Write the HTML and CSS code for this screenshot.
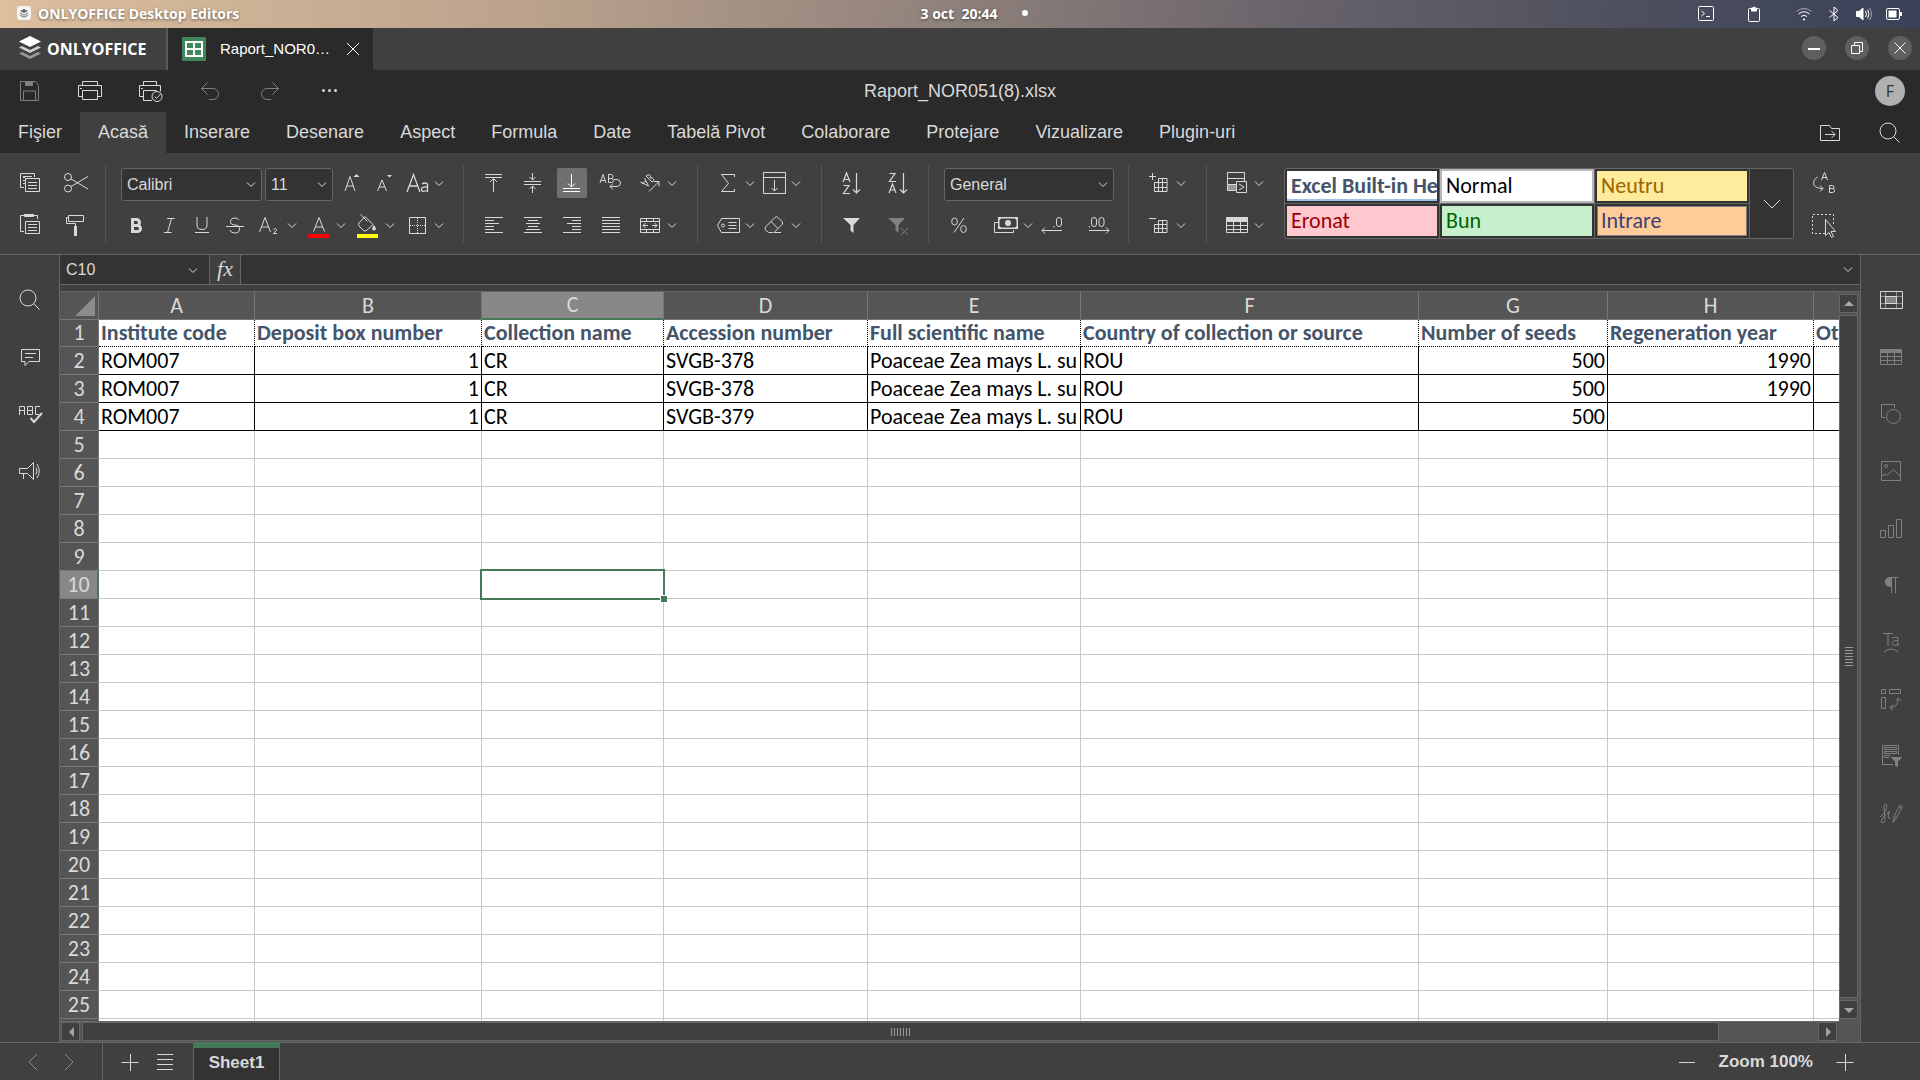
FILE: index.html
```html
<!DOCTYPE html>
<html lang="ro">
<head>
<meta charset="utf-8">
<title>Raport_NOR051(8).xlsx - ONLYOFFICE</title>
<link rel="stylesheet" href="styles.css">
</head>
<body>
<svg class="defs" aria-hidden="true">
  <symbol id="chev" viewBox="0 0 14 30"><path d="M3 13.500l4 4 4-4"/></symbol>
  <symbol id="find" viewBox="0 0 30 30"><circle cx="13" cy="13" r="8"/><path d="M18.500 18.500l6 6"/></symbol>
  <symbol id="stack" viewBox="0 0 24 28"><path fill="#fff" stroke="none" d="M12 1l11 5.500-11 5.500L1 6.500z"/><path fill="#d0d0d0" stroke="none" d="M1 12.500l3-1.500 8 4 8-4 3 1.500-11 5.500z"/><path fill="#999" stroke="none" d="M1 18.500l3-1.500 8 4 8-4 3 1.500-11 5.500z"/></symbol>
</svg>

<div class="system-bar">
  <div class="system-app">
    <svg class="app-badge" width="14" height="14" viewBox="0 0 14 14"><rect width="14" height="14" rx="3" fill="#f2f2f2" stroke="none"/><path fill="#666" stroke="none" d="M7 3l4 2-4 2-4-2z"/><path stroke="#777" d="M3 7.200l4 2 4-2M3 9.200l4 2 4-2"/></svg>
    <span>ONLYOFFICE Desktop Editors</span>
  </div>
  <div class="system-clock"><span>3 oct&nbsp; 20:44</span><i class="clock-dot"></i></div>
  <div class="system-tray">
    <svg class="tray-wide" width="18" height="18" viewBox="0 0 18 18"><rect x="1.500" y="1.500" width="15" height="14" rx="1"/><path d="M4.500 6l3 2.500-3 2.500M9 11.500h4"/></svg>
    <svg class="tray-wider" width="18" height="18" viewBox="0 0 18 18"><rect x="3.500" y="3.500" width="11" height="13" rx="1"/><path fill="currentColor" d="M6.500 3h1.500a1 1 0 0 1 2 0h1.500v3h-5z"/></svg>
    <svg width="18" height="18" viewBox="0 0 18 18"><path opacity=".5" d="M1.500 6.500q7.500-6 15 0"/><path d="M3.500 9q5.500-4.500 11 0M6 11.500q3-2.500 6 0"/><circle cx="9" cy="14.500" r="1" fill="currentColor" stroke="none"/></svg>
    <svg width="18" height="18" viewBox="0 0 18 18"><path d="M4.500 5.500l8.500 7-4 3.500V2l4 3.500-8.500 7"/></svg>
    <svg width="18" height="18" viewBox="0 0 18 18"><path fill="currentColor" d="M1.500 6.500h2.500l4-3.500v12l-4-3.500H1.500z"/><path d="M10.500 6q2 3 0 6M12.500 4.500q3 4.500 0 9"/><path opacity=".5" d="M14.500 3q4 6 0 12"/></svg>
    <svg width="18" height="18" viewBox="0 0 18 18"><rect x="1.500" y="3.500" width="13" height="11" rx="1.500"/><path fill="currentColor" stroke="none" d="M3.500 5.500h8v7h-8zM15 7h2v4h-2z"/></svg>
  </div>
</div>

<div class="window-bar">
  <a class="brand" href="#"><svg width="24" height="28"><use href="#stack"/></svg><span>ONLYOFFICE</span></a>
  <div class="doc-tab">
    <svg width="24" height="24" viewBox="0 0 24 24"><rect width="24" height="24" rx="1" fill="#40865c" stroke="none"/><path stroke="#fff" stroke-width="2" d="M4 5h16v14H4zM12 5v14M4 12h16"/></svg>
    <span>Raport_NOR0…</span>
    <button class="plain" aria-label="Close tab"><svg width="14" height="14" viewBox="0 0 14 14"><path d="M1 1l12 12M13 1L1 13"/></svg></button>
  </div>
  <div class="window-buttons">
    <button aria-label="Minimize"><svg width="24" height="24" viewBox="0 0 24 24"><path stroke-width="2" d="M6 13h12"/></svg></button>
    <button aria-label="Restore"><svg width="24" height="24" viewBox="0 0 24 24"><path d="M9.500 9V6.500h8v9H15M6.500 9.500h8v8h-8z"/></svg></button>
    <button aria-label="Close"><svg width="24" height="24" viewBox="0 0 24 24"><path d="M6.500 6.500l11 11M17.500 6.500l-11 11"/></svg></button>
  </div>
</div>

<header class="title-row">
  <div class="quick-access">
    <button class="plain off" aria-label="Save"><svg width="30" height="30" viewBox="0 0 30 30"><path d="M5.500 5.500h15l3 4v15h-18zM8.500 24v-9h12v9"/><path fill="currentColor" d="M10.500 5.500h7v4h-7z"/></svg></button>
    <button class="plain" aria-label="Print"><svg width="30" height="30" viewBox="0 0 30 30"><path d="M7.500 10V5.500h15V10M7.500 20.500h-4v-11h23v11h-4M7.500 14.500h15v9h-15zM5 12.500h2"/></svg></button>
    <button class="plain" aria-label="Quick print"><svg width="30" height="30" viewBox="0 0 30 30"><path d="M8.500 10V5.500h13V10M8.500 20.500h-4v-11h21v6M17 24.500H8.500v-10h13M6 12.500h2"/><circle cx="22" cy="20.500" r="5"/><path d="M19.500 20.500l2 2 4-4.500"/></svg></button>
    <button class="plain off" aria-label="Undo"><svg width="30" height="30" viewBox="0 0 30 30"><path d="M12.500 6.500l-6 6 6 6M6.500 12.500h11.500a5.500 5.500 0 0 1 0 11h-4"/></svg></button>
    <button class="plain off" aria-label="Redo"><svg width="30" height="30" viewBox="0 0 30 30"><path d="M17.500 6.500l6 6-6 6M23.500 12.500H12a5.500 5.500 0 0 0 0 11h4"/></svg></button>
    <button class="plain" aria-label="More"><svg width="30" height="30" viewBox="0 0 30 30"><g fill="currentColor" stroke="none"><circle cx="8.500" cy="14.500" r="1.500"/><circle cx="14.500" cy="14.500" r="1.500"/><circle cx="20.500" cy="14.500" r="1.500"/></g></svg></button>
  </div>
  <h1>Raport_NOR051(8).xlsx</h1>
  <div class="user"><span class="avatar">F</span></div>
</header>

<nav class="menu">
  <button class="menu-tab">Fişier</button><button class="menu-tab is-active">Acasă</button><button class="menu-tab">Inserare</button><button class="menu-tab">Desenare</button><button class="menu-tab">Aspect</button><button class="menu-tab">Formula</button><button class="menu-tab">Date</button><button class="menu-tab">Tabelă Pivot</button><button class="menu-tab">Colaborare</button><button class="menu-tab">Protejare</button><button class="menu-tab">Vizualizare</button><button class="menu-tab">Plugin-uri</button>
  <div class="menu-tools">
    <button class="plain" aria-label="Open location"><svg width="30" height="30" viewBox="0 0 30 30"><path d="M5.500 7.500h9l2 3h8v12h-19zM10 16.500h10M16.500 13l3.500 3.500-3.500 3.500"/></svg></button>
    <button class="plain" aria-label="Search"><svg width="30" height="30"><use href="#find"/></svg></button>
  </div>
</nav>

<div class="ribbon">
  <div class="group clipboard">
    <div class="line">
      <button class="tb" aria-label="Copy"><svg viewBox="0 0 30 30"><path d="M9 19.500H5.500v-14h14V9M8 9.500h2M8 12.500h2M8 15.500h2M10.500 10.500h14v13h-14zM13 14.500h9M13 17.500h9M13 20.500h9M8 8.500h9"/></svg></button>
      <button class="tb" aria-label="Cut"><svg viewBox="0 0 30 30"><circle cx="7" cy="9" r="3.500"/><circle cx="7" cy="20.500" r="3.500"/><path d="M10 11l17 10M10 18.500l17-10"/></svg></button>
    </div>
    <div class="line">
      <button class="tb" aria-label="Paste"><svg viewBox="0 0 30 30"><path d="M9 21.500H5.500v-16h17V9M10.500 11.500h14v12h-14zM13 14.500h9M13 17.500h9M13 20.500h9"/><path fill="currentColor" d="M9.500 4.500h9v2h-9z"/></svg></button>
      <button class="tb" aria-label="Copy style"><svg viewBox="0 0 30 30"><path d="M7.500 5.500h15v6h-15zM7 7.500H5.500v6h9V17"/><path fill="currentColor" stroke="none" d="M13 16h3v10h-3z"/></svg></button>
    </div>
  </div>
  <i class="sep"></i>
  <div class="group font-group">
    <div class="line tight">
      <label class="combo font-name"><select aria-label="Font"><option>Calibri</option></select><svg viewBox="0 0 14 30"><use href="#chev"/></svg></label>
      <label class="combo font-size"><select aria-label="Font size"><option>11</option></select><svg viewBox="0 0 14 30"><use href="#chev"/></svg></label>
      <button class="tb" aria-label="Increase size"><svg viewBox="0 0 30 30"><path d="M9 23l5-14.500L19 23M10.500 18h7"/><path fill="currentColor" stroke="none" d="M17.500 9l3-3 3 3z"/></svg></button>
      <button class="tb" aria-label="Decrease size"><svg viewBox="0 0 30 30"><path d="M8.500 23l4.500-11 4.500 11M10 19h6"/><path fill="currentColor" stroke="none" d="M18 7h5l-2.500 2.500z"/></svg></button>
      <button class="tb drop" aria-label="Change case"><svg viewBox="0 0 30 30"><path stroke-width="1.300" d="M5 24L11.500 6.500 18 24M7.500 18h8"/><path stroke-width="1.300" d="M20 16q3-2 5.500 0v8M25.500 19q-6-.5-6 2.500t6 1"/></svg><svg class="chev"><use href="#chev"/></svg></button>
    </div>
    <div class="line split">
      <div class="line tight">
        <button class="tb" aria-label="Bold"><svg viewBox="0 0 30 30"><path stroke-width="3" d="M11.500 9.500h4a3 3 0 0 1 0 6h-4zM11.500 15.500h5a3 3 0 0 1 0 6h-5z"/></svg></button>
        <button class="tb" aria-label="Italic"><svg viewBox="0 0 30 30"><path d="M13 8.500h7.500M10 22.500h7.500M17.500 8.500l-4 14"/></svg></button>
        <button class="tb" aria-label="Underline"><svg viewBox="0 0 30 30"><path d="M10 7v8q0 4.500 5 4.500t5-4.500V7M8 22.500h14"/></svg></button>
        <button class="tb" aria-label="Strikethrough"><svg viewBox="0 0 30 30"><path d="M19 10q-1-2-4-2-4.500 0-4.500 3.500t4.500 3.500 4.500 4-4.500 4-5-3M6 16.500h18"/></svg></button>
      </div>
      <div class="line roomy">
        <button class="tb drop" aria-label="Subscript"><svg viewBox="0 0 30 30"><path d="M4.500 22L10 7.500 15.500 22M6.500 17h7M18.500 19.500q2.500-2 3 0 0 1-3 4h3.500"/></svg><svg class="chev"><use href="#chev"/></svg></button>
        <button class="tb drop" aria-label="Font colour"><svg viewBox="0 0 30 30"><path d="M9.500 21.500l5.500-14 5.500 14M11.500 17h7"/><path fill="#f00" stroke="none" d="M4 24h21v4H4z"/></svg><svg class="chev"><use href="#chev"/></svg></button>
        <button class="tb drop" aria-label="Fill colour"><svg viewBox="0 0 30 30"><path d="M12 6.500l8 8-6.500 6q-1.500 1-3 0l-4.500-4.500q-1-1.500 0-3zM7.500 4.500l7 7"/><path fill="currentColor" stroke="none" d="M21 15q4 5 0 5.500-4-.5 0-5.500z"/><path fill="#ff0" stroke="none" d="M4 24h21v4H4z"/></svg><svg class="chev"><use href="#chev"/></svg></button>
        <button class="tb drop" aria-label="Borders"><svg viewBox="0 0 30 30"><path d="M7.500 7.500h16v16h-16z"/><path stroke-dasharray="1 1" d="M15.500 8v15M8 15.500h15"/></svg><svg class="chev"><use href="#chev"/></svg></button>
      </div>
    </div>
  </div>
  <i class="sep"></i>
  <div class="group drops">
    <div class="line nine">
      <button class="tb" aria-label="Align top"><svg viewBox="0 0 30 30"><path d="M6 6.500h17M6 9.500h17M14.500 24V11M11 14l3.500-3.500L18 14"/></svg></button>
      <button class="tb" aria-label="Align middle"><svg viewBox="0 0 30 30"><path d="M6 13.500h17M6 16.500h17M14.500 5v7M11.500 9l3 3 3-3M14.500 25v-7M11.500 21l3-3 3 3"/></svg></button>
      <button class="tb is-on" aria-label="Align bottom"><svg viewBox="0 0 30 30"><path d="M6 20.500h17M6 23.500h17M14.500 6v13M11 15.500l3.500 3.500 3.500-3.500"/></svg></button>
      <button class="tb" aria-label="Wrap text"><svg viewBox="0 0 30 30"><path d="M4 15l3-8.500L10 15M5 12.500h4M12.500 6.500v8h3q2-.5 2-2t-2-2h-3 3q1.500-.5 1.500-2t-1.500-2zM18 11.500h3q3.500.5 3.500 3.500t-3.500 3.500h-7M17 15.500l-3 3 3 3"/></svg></button>
      <button class="tb drop" aria-label="Orientation"><svg viewBox="0 0 30 30"><path d="M5.500 14l8 4-4-8M7 16l4-3M11 8l6 6q2.500-1 1.500-3t-3.500-1q1-2-.5-3t-3.500 1zM14 23.500L24 13.500M19 13.500h5v5"/></svg><svg class="chev"><use href="#chev"/></svg></button>
    </div>
    <div class="line nine">
      <button class="tb" aria-label="Align left"><svg viewBox="0 0 30 30"><path d="M6 7.500h18M6 10.500h9M6 13.500h14M6 16.500h9M6 19.500h9M6 22.500h18"/></svg></button>
      <button class="tb" aria-label="Align centre"><svg viewBox="0 0 30 30"><path d="M6 7.500h18M10 10.500h10M8 13.500h14M10 16.500h10M8 19.500h14M6 22.500h18"/></svg></button>
      <button class="tb" aria-label="Align right"><svg viewBox="0 0 30 30"><path d="M6 7.500h18M15 10.500h9M10 13.500h14M15 16.500h9M15 19.500h9M6 22.500h18"/></svg></button>
      <button class="tb" aria-label="Justify"><svg viewBox="0 0 30 30"><path d="M6 7.500h18M6 10.500h18M6 13.500h18M6 16.500h18M6 19.500h18M6 22.500h18"/></svg></button>
      <button class="tb drop" aria-label="Merge"><svg viewBox="0 0 30 30"><path d="M5.500 8.500h19v14h-19zM5.500 11.500h19M5.500 19.500h19M11.500 8.500v3M18.500 8.500v3M11.500 19.500v3M18.500 19.500v3M8 15.500h5M17 15.500h5M10.500 13l-2.500 2.500 2.500 2.500M19.500 13l2.500 2.500-2.500 2.500"/></svg><svg class="chev"><use href="#chev"/></svg></button>
    </div>
  </div>
  <i class="sep"></i>
  <div class="group drops">
    <div class="line snug">
      <button class="tb drop" aria-label="Sum"><svg viewBox="0 0 30 30"><path d="M21.500 9V6.500h-13l7 9-7 8h13V21"/></svg><svg class="chev"><use href="#chev"/></svg></button>
      <button class="tb drop" aria-label="Fill"><svg viewBox="0 0 30 30"><path d="M4.500 4.500h22v21h-22zM4.500 9.500h22M15.500 12v11M12.500 20l3 3 3-3"/></svg><svg class="chev"><use href="#chev"/></svg></button>
    </div>
    <div class="line snug">
      <button class="tb drop" aria-label="Named ranges"><svg viewBox="0 0 30 30"><path d="M8.500 8.500h18v14h-18l-4-7zM15.500 12.500h8M15.500 15.500h8M15.500 18.500h8"/><circle cx="10" cy="15.500" r="1.500"/></svg><svg class="chev"><use href="#chev"/></svg></button>
      <button class="tb drop" aria-label="Clear"><svg viewBox="0 0 30 30"><path d="M14 22.500H9.500L6.500 20q-1-1.500 0-3L16 7.500q1.500-1.500 3 0l4 4q1.500 1.500 0 3l-8 8h7M12 11.500l7 7"/></svg><svg class="chev"><use href="#chev"/></svg></button>
    </div>
  </div>
  <i class="sep"></i>
  <div class="group">
    <div class="line wide">
      <button class="tb" aria-label="Sort ascending"><svg viewBox="0 0 30 30"><path stroke-width="1.200" d="M6 14l3.500-9 3.500 9M7.500 11.500h4M6.500 17.500H12l-5.500 8H13M19.500 5v20M16 21.500l3.500 3.500 3.500-3.500"/></svg></button>
      <button class="tb" aria-label="Sort descending"><svg viewBox="0 0 30 30"><path stroke-width="1.200" d="M5.500 5.500H11l-5.500 8H12M5 25l3.500-9 3.500 9M6.500 22h4M19.500 5v20M16 21.500l3.500 3.500 3.500-3.500"/></svg></button>
    </div>
    <div class="line wide">
      <button class="tb" aria-label="Filter"><svg viewBox="0 0 30 30"><path fill="currentColor" stroke="none" d="M6 8h17l-6.500 7v8l-3-2.500V15z"/></svg></button>
      <button class="tb off" aria-label="Clear filter"><svg viewBox="0 0 30 30"><path fill="currentColor" stroke="none" d="M4 8h17l-6.500 7v8l-3-2.500V15z"/><path d="M17 18l7 7M24 18l-7 7"/></svg></button>
    </div>
  </div>
  <i class="sep"></i>
  <div class="group number-format">
    <label class="combo"><select aria-label="Number format"><option>General</option></select><svg viewBox="0 0 14 30"><use href="#chev"/></svg></label>
    <div class="line split">
      <button class="tb" aria-label="Percent"><svg viewBox="0 0 30 30"><ellipse cx="10.500" cy="11.500" rx="2.800" ry="3.500"/><ellipse cx="19.500" cy="19" rx="2.800" ry="3.500"/><path d="M20 8L10 22.500"/></svg></button>
      <div class="line snug">
        <button class="tb drop" aria-label="Accounting"><svg viewBox="0 0 30 30"><path d="M7 12.500H3.500v10h19V20"/><path fill="currentColor" fill-rule="evenodd" stroke="none" d="M7 7h20v12H7zM10 8.500L8.500 10v6l1.500 1.500h14l1.500-1.500v-6L24 8.500z"/><circle cx="17" cy="13" r="3" fill="currentColor" stroke="none"/></svg><svg class="chev"><use href="#chev"/></svg></button>
        <button class="tb" aria-label="Decrease decimals"><svg viewBox="0 0 30 30"><path d="M5 20.500h20M8 17.500l-3 3 3 3M17 16v1.500"/><rect x="19.500" y="7.500" width="5" height="9" rx="2.500"/></svg></button>
      </div>
      <button class="tb" aria-label="Increase decimals"><svg viewBox="0 0 30 30"><path d="M5 20.500h20M22 17.500l3 3-3 3M5.500 16v1.500"/><rect x="7.500" y="7.500" width="5" height="9" rx="2.500"/><rect x="15" y="7.500" width="5" height="9" rx="2.500"/></svg></button>
    </div>
  </div>
  <i class="sep"></i>
  <div class="group drops">
    <button class="tb drop" aria-label="Insert cells"><svg viewBox="0 0 30 30"><path d="M5 8.500h7M8.500 5v7M14.500 10.500h8.500v13H10.500v-9h12.500M10.500 19.500H23M14.500 10.500v13M18.500 10.500v13"/></svg><svg class="chev"><use href="#chev"/></svg></button>
    <button class="tb drop" aria-label="Delete cells"><svg viewBox="0 0 30 30"><path d="M5 8.500h7M14.500 10.500h8.500v12H10.500v-8h12.500M10.500 18.500H23M14.500 10.500v12M18.500 10.500v12"/></svg><svg class="chev"><use href="#chev"/></svg></button>
  </div>
  <i class="sep"></i>
  <div class="group drops">
    <button class="tb drop" aria-label="Conditional formatting"><svg viewBox="0 0 30 30"><path fill="#999" stroke="none" d="M6 17h8v6H6z"/><path d="M13 22.500H5.500v-18h17V13M5.500 10.500h17M5.500 16.500H14M14.500 13.500h10v11h-10zM17 16l5 3-5 3"/></svg><svg class="chev"><use href="#chev"/></svg></button>
    <button class="tb drop" aria-label="Format as table"><svg viewBox="0 0 30 30"><path fill="currentColor" stroke="none" d="M4 7h22v5H4z"/><path d="M4.500 8v14.500h21V8M4.500 15.500h21M4.500 19.500h21M11.500 12v10M18.500 12v10"/></svg><svg class="chev"><use href="#chev"/></svg></button>
  </div>
  <div class="gallery">
    <div class="styles">
      <button class="style-cell"><span class="swatch heading">Excel Built-in He</span></button>
      <button class="style-cell picked"><span class="swatch normal">Normal</span></button>
      <button class="style-cell"><span class="swatch neutral">Neutru</span></button>
      <button class="style-cell"><span class="swatch bad">Eronat</span></button>
      <button class="style-cell"><span class="swatch good">Bun</span></button>
      <button class="style-cell"><span class="swatch entry">Intrare</span></button>
    </div>
    <button class="plain gallery-more" aria-label="More styles"><svg width="18" height="10" viewBox="0 0 18 10"><path d="M1 1l8 8 8-8"/></svg></button>
  </div>
  <div class="group">
    <button class="tb" aria-label="Replace"><svg viewBox="0 0 30 30"><path d="M8.500 9q-5 3-3.500 8 2 3.500 9 3.500M11 17.500l3 3-3 3M12.500 12l3-7.500 3 7.500M13.500 9.500h4M20.500 17.500v7h3q2 0 2-2t-2-2h-3 3q1.500 0 1.500-1.500t-1.500-1.500z"/></svg></button>
    <button class="tb" aria-label="Select all"><svg viewBox="0 0 30 30"><path stroke-dasharray="2 2" d="M16 23.500H3.500v-19h21V14"/><path fill="#404040" d="M16.500 9.500v16l3.500-3 2.500 5 2-1-2.500-5h4.500z"/></svg></button>
  </div>
</div>

<main class="workspace">
  <aside class="rail">
    <button class="plain" aria-label="Search"><svg width="30" height="30"><use href="#find"/></svg></button>
    <button class="plain" aria-label="Comments"><svg width="30" height="30" viewBox="0 0 30 30"><path d="M6.500 7.500h18v12H14l-4 4v-4H6.500zM10 11.500h11M10 15.500h8"/></svg></button>
    <button class="plain" aria-label="Spell check"><svg width="30" height="30" viewBox="0 0 30 30"><path d="M4.500 16V7.500h5V16M4.500 11.500h5M12.500 7.500v8h5v-8zM12.500 11.500h5M25 7.500h-4.500v8H24"/><path stroke-width="2" d="M15.500 19l3.500 4 8-9"/></svg></button>
    <button class="plain" aria-label="Support"><svg width="30" height="30" viewBox="0 0 30 30"><path d="M4.500 12.500h8l6-6v17l-6-6h-8zM8.500 18v5M21 11.500q2 3.500 0 7M22 8q4.500 7 0 14"/></svg></button>
  </aside>

  <section class="editor">
    <div class="formula-bar">
      <label class="name-box"><input type="text" value="C10" aria-label="Cell name"><svg viewBox="0 0 14 30"><use href="#chev"/></svg></label>
      <button class="plain fx" aria-label="Insert function">fx</button>
      <input class="formula" type="text" aria-label="Formula">
      <button class="plain expand" aria-label="Expand"><svg class="chev"><use href="#chev"/></svg></button>
    </div>
    <div class="grid-area">
      <div class="sheet-column">
        <div class="sheet">
          <table>
            <colgroup><col class="c-head"><col class="c-a"><col class="c-b"><col class="c-c"><col class="c-d"><col class="c-e"><col class="c-f"><col class="c-g"><col class="c-h"><col></colgroup>
            <thead><tr><th class="corner"><svg width="20" height="20" viewBox="0 0 20 20"><path fill="#8c8c8c" stroke="none" d="M20 0v20H0z"/></svg></th><th>A</th><th>B</th><th class="current">C</th><th>D</th><th>E</th><th>F</th><th>G</th><th>H</th><th></th></tr></thead>
            <tbody>
              <tr class="titles"><th>1</th><td>Institute code</td><td>Deposit box number</td><td>Collection name</td><td>Accession number</td><td>Full scientific name</td><td>Country of collection or source</td><td>Number of seeds</td><td>Regeneration year</td><td>Ot</td></tr>
              <tr class="data"><th>2</th><td>ROM007</td><td class="num">1</td><td>CR</td><td>SVGB-378</td><td>Poaceae Zea mays L. su</td><td>ROU</td><td class="num">500</td><td class="num">1990</td><td></td></tr>
              <tr class="data"><th>3</th><td>ROM007</td><td class="num">1</td><td>CR</td><td>SVGB-378</td><td>Poaceae Zea mays L. su</td><td>ROU</td><td class="num">500</td><td class="num">1990</td><td></td></tr>
              <tr class="data"><th>4</th><td>ROM007</td><td class="num">1</td><td>CR</td><td>SVGB-379</td><td>Poaceae Zea mays L. su</td><td>ROU</td><td class="num">500</td><td></td><td></td></tr>
              <tr><th>5</th><td></td><td></td><td></td><td></td><td></td><td></td><td></td><td></td><td></td></tr>
              <tr><th>6</th><td></td><td></td><td></td><td></td><td></td><td></td><td></td><td></td><td></td></tr>
              <tr><th>7</th><td></td><td></td><td></td><td></td><td></td><td></td><td></td><td></td><td></td></tr>
              <tr><th>8</th><td></td><td></td><td></td><td></td><td></td><td></td><td></td><td></td><td></td></tr>
              <tr><th>9</th><td></td><td></td><td></td><td></td><td></td><td></td><td></td><td></td><td></td></tr>
              <tr><th class="current">10</th><td></td><td></td><td class="selected"><i class="cursor"></i></td><td></td><td></td><td></td><td></td><td></td><td></td></tr>
              <tr><th>11</th><td></td><td></td><td></td><td></td><td></td><td></td><td></td><td></td><td></td></tr>
              <tr><th>12</th><td></td><td></td><td></td><td></td><td></td><td></td><td></td><td></td><td></td></tr>
              <tr><th>13</th><td></td><td></td><td></td><td></td><td></td><td></td><td></td><td></td><td></td></tr>
              <tr><th>14</th><td></td><td></td><td></td><td></td><td></td><td></td><td></td><td></td><td></td></tr>
              <tr><th>15</th><td></td><td></td><td></td><td></td><td></td><td></td><td></td><td></td><td></td></tr>
              <tr><th>16</th><td></td><td></td><td></td><td></td><td></td><td></td><td></td><td></td><td></td></tr>
              <tr><th>17</th><td></td><td></td><td></td><td></td><td></td><td></td><td></td><td></td><td></td></tr>
              <tr><th>18</th><td></td><td></td><td></td><td></td><td></td><td></td><td></td><td></td><td></td></tr>
              <tr><th>19</th><td></td><td></td><td></td><td></td><td></td><td></td><td></td><td></td><td></td></tr>
              <tr><th>20</th><td></td><td></td><td></td><td></td><td></td><td></td><td></td><td></td><td></td></tr>
              <tr><th>21</th><td></td><td></td><td></td><td></td><td></td><td></td><td></td><td></td><td></td></tr>
              <tr><th>22</th><td></td><td></td><td></td><td></td><td></td><td></td><td></td><td></td><td></td></tr>
              <tr><th>23</th><td></td><td></td><td></td><td></td><td></td><td></td><td></td><td></td><td></td></tr>
              <tr><th>24</th><td></td><td></td><td></td><td></td><td></td><td></td><td></td><td></td><td></td></tr>
              <tr><th>25</th><td></td><td></td><td></td><td></td><td></td><td></td><td></td><td></td><td></td></tr>
              <tr><th></th><td></td><td></td><td></td><td></td><td></td><td></td><td></td><td></td><td></td></tr>
            </tbody>
          </table>
        </div>
        <div class="scroll horizontal">
          <button class="scroll-arrow" aria-label="Scroll left"><svg width="10" height="10" viewBox="0 0 10 10"><path d="M8 0v10L3 5z"/></svg></button>
          <div class="thumb"><i class="grip"></i></div>
          <div class="track"></div>
          <button class="scroll-arrow" aria-label="Scroll right"><svg width="10" height="10" viewBox="0 0 10 10"><path d="M3 0v10l5-5z"/></svg></button>
        </div>
      </div>
      <div class="scroll vertical">
        <button class="scroll-arrow" aria-label="Scroll up"><svg width="10" height="10" viewBox="0 0 10 10"><path d="M0 7h10L5 2z"/></svg></button>
        <div class="thumb"><i class="grip"></i></div>
        <button class="scroll-arrow" aria-label="Scroll down"><svg width="10" height="10" viewBox="0 0 10 10"><path d="M0 3h10L5 8z"/></svg></button>
      </div>
    </div>
  </section>

  <aside class="rail side-panel">
    <button class="plain" aria-label="Cell settings"><svg width="30" height="30" viewBox="0 0 30 30"><path opacity=".5" d="M9.500 6v17M20.500 6v17M4 11.500h22M4 18.500h22"/><path d="M4.500 6.500h22v17h-22z"/><path fill="#858585" d="M9.500 11.500h11v7h-11z"/></svg></button>
    <button class="plain off" aria-label="Table"><svg width="30" height="30" viewBox="0 0 30 30"><path fill="currentColor" stroke="none" d="M4 7h22v4H4z"/><path d="M4.500 8v14.500h21V8M4.500 14.500h21M4.500 18.500h21M11.500 11v11M18.500 11v11"/></svg></button>
    <button class="plain off" aria-label="Shape"><svg width="30" height="30" viewBox="0 0 30 30"><path d="M9 18.500H5.500v-13h13V9"/><circle cx="17.500" cy="17.500" r="7"/></svg></button>
    <button class="plain off" aria-label="Image"><svg width="30" height="30" viewBox="0 0 30 30"><path d="M5.500 5.500h19v19h-19zM6 20l3-2 2 1.500 6-6 7 6.500"/><circle cx="10" cy="10" r="1.500"/></svg></button>
    <button class="plain off" aria-label="Chart"><svg width="30" height="30" viewBox="0 0 30 30"><path d="M4.500 17.500h5v7h-5zM12.500 12.500h5v12h-5zM20.500 6.500h5v18h-5z"/></svg></button>
    <button class="plain off" aria-label="Paragraph"><svg width="30" height="30" viewBox="0 0 30 30"><path d="M13 7.500h9M15.500 7v16M19.500 7v16"/><path fill="currentColor" stroke="none" d="M15 7v10q-6 0-6-5T15 7z"/></svg></button>
    <button class="plain off" aria-label="Text art"><svg width="30" height="30" viewBox="0 0 30 30"><path d="M7 6.500h10M12 6.500V19M16 11q4-2 6 0v8M22 13.500q-6 0-6 3 1 3 6 1M8 25q7-6 14 0"/></svg></button>
    <button class="plain off" aria-label="Pivot table"><svg width="30" height="30" viewBox="0 0 30 30"><path d="M5.500 5.500h4v4h-4zM13.500 5.500h11v4h-11zM5.500 13.500h4v11h-4zM14 23.500q8 0 8.500-9.500M19.500 17l3-3 3 3M17 20.500l-3 3 3 2.500"/></svg></button>
    <button class="plain off" aria-label="Slicer"><svg width="30" height="30" viewBox="0 0 30 30"><path d="M17 23.500H6.500v-19h16V14M8.500 6.500h12v2h-12zM8.500 10.500h12v2h-12zM13 16.500H8.500v-2h6"/><path fill="currentColor" d="M15.500 16.500h10l-4 4v5l-2-1v-4z"/></svg></button>
    <button class="plain off" aria-label="Signature"><svg width="30" height="30" viewBox="0 0 30 30"><path d="M4 19q8-6 6.500-12.500-2-2.500-2.500 3L9 22q-1 4-3.500 2.500T13.500 13q-3 9 1 7M17 24.500l1-6 6-11.500 2.500 1.500-6 11.500zM18 18.500l2.500 1.500M23 9l2.500 1.500"/></svg></button>
  </aside>
</main>

<footer class="status">
  <div class="status-nav">
    <button class="plain" aria-label="Previous sheet"><svg width="12" height="18" viewBox="0 0 12 18"><path d="M10 1L2 9l8 8"/></svg></button>
    <button class="plain" aria-label="Next sheet"><svg width="12" height="18" viewBox="0 0 12 18"><path d="M2 1l8 8-8 8"/></svg></button>
  </div>
  <div class="status-add">
    <button class="plain" aria-label="Add sheet"><svg width="18" height="18" viewBox="0 0 18 18"><path d="M.5 9.500h17M9.500 1v17"/></svg></button>
    <button class="plain" aria-label="Sheet list"><svg width="18" height="18" viewBox="0 0 18 18"><path d="M1 1.500h16M1 6.500h16M1 11.500h16M1 16.500h16"/></svg></button>
  </div>
  <button class="sheet-tab">Sheet1</button>
  <div class="zoom">
    <button class="plain" aria-label="Zoom out"><svg width="18" height="18" viewBox="0 0 18 18"><path d="M1 9.500h16"/></svg></button>
    <span>Zoom 100%</span>
    <button class="plain" aria-label="Zoom in"><svg width="18" height="18" viewBox="0 0 18 18"><path d="M.5 9.500h17M9.500 1v17"/></svg></button>
  </div>
</footer>
</body>
</html>
```
FILE: styles.css
```css
:root {
  --panel: #404040;
  --dark: #2a2a2a;
  --field: #333;
  --line: #666;
  --head: #555;
  --text: #d9d9d9;
  --green: #457a58;
  --cell-font: Carlito, Lato, sans-serif;
}

* { box-sizing: border-box; }

body {
  margin: 0;
  height: 100vh;
  display: flex;
  flex-direction: column;
  overflow: hidden;
  background: var(--panel);
  color: var(--text);
  font: 16px "Liberation Sans", Arial, sans-serif;
}

svg { display: block; fill: none; stroke: currentColor; }
.defs { position: absolute; width: 0; height: 0; }

button, input, select { font: inherit; color: inherit; margin: 0; border: 0; padding: 0; border-radius: 0; outline: 0; }
.plain { background: none; display: flex; align-items: center; justify-content: center; }
.off { color: #808080; }

/* desktop bar */
.system-bar {
  height: 28px;
  flex: none;
  display: grid;
  grid-template-columns: 1fr auto 1fr;
  align-items: center;
  background: linear-gradient(100deg, #ddbf9e 0%, #baa28c 28%, #8e807b 50%, #67626a 68%, #4d4f5e 85%, #3a4158 100%);
  color: #fff;
  font: 700 14px "Open Sans", sans-serif;
  text-shadow: 0 1px 3px rgba(0, 0, 0, .5);
}
.system-app { display: flex; align-items: center; gap: 7px; padding: 0 0 2px 17px; }
.system-clock { display: flex; align-items: center; position: relative; padding: 0 2px 2px 0; }
.clock-dot { position: absolute; left: 101px; width: 6px; height: 6px; border-radius: 50%; background: #fff; }
.system-tray { display: flex; justify-content: flex-end; gap: 12px; padding-right: 17px; }
.tray-wide { margin-right: 18px; }
.tray-wider { margin-right: 20px; }

/* window bar */
.window-bar { height: 42px; flex: none; display: flex; }
.brand {
  width: 168px;
  display: flex;
  align-items: center;
  gap: 5px;
  padding-left: 18px;
  border-right: 2px solid #585858;
  color: #fff;
  text-decoration: none;
  font: 700 16px "Open Sans", sans-serif;
}
.doc-tab {
  width: 205px;
  display: flex;
  align-items: center;
  padding: 0 13px 0 14px;
  background: var(--dark);
  color: #fff;
  font-size: 15px;
}
.doc-tab span { flex: 1; padding: 0 0 2px 14px; white-space: nowrap; }
.window-buttons { margin-left: auto; display: flex; align-items: center; gap: 19px; padding: 0 8px 2px 0; }
.window-buttons button { width: 24px; height: 24px; border-radius: 50%; background: #5f5f5f; color: #fff; }

/* title and menu */
.title-row {
  height: 42px;
  flex: none;
  display: grid;
  grid-template-columns: 1fr auto 1fr;
  align-items: center;
  background: var(--dark);
}
.title-row h1 { margin: 0; font-size: 18px; font-weight: 400; }
.quick-access { display: flex; }
.quick-access button { width: 60px; }
.user { display: flex; justify-content: flex-end; padding-right: 15px; }
.avatar {
  width: 30px;
  height: 30px;
  border-radius: 50%;
  background: #b0b0b0;
  color: #333;
  font: 16px/30px "Open Sans", sans-serif;
  text-align: center;
}
.menu { height: 41px; flex: none; display: flex; background: var(--dark); }
.menu-tab { padding: 0 18px; background: none; font-size: 18px; }
.menu-tab.is-active { background: var(--panel); }
.menu-tools { margin-left: auto; display: flex; }
.menu-tools button { width: 60px; }

/* ribbon */
.ribbon {
  height: 102px;
  flex: none;
  display: flex;
  padding: 15px 0 0 15px;
  border-bottom: 1px solid var(--line);
}
.group { display: flex; flex-direction: column; gap: 12px; height: 72px; }
.group.drops { padding-right: 4px; }
.group.font-group { padding-right: 3px; }
.sep { width: 1px; height: 78px; margin: -3px 15px 0 14px; background: #555; }
.line { display: flex; height: 30px; }
.line.split { justify-content: space-between; }
.clipboard .line { gap: 16px; }
.snug { gap: 2px; }
.tight { gap: 3px; }
.roomy { gap: 5px; }
.nine { gap: 9px; }
.wide { gap: 17px; }
.tb { width: 30px; height: 30px; background: none; }
.tb svg { width: 30px; height: 30px; }
.tb.drop { width: 44px; display: flex; }
.tb svg.chev, .chev { width: 14px; height: 30px; }
.tb.is-on { background: #707070; border-radius: 2px; color: #fff; }
.combo { position: relative; display: block; height: 32px; }
.combo select {
  width: 100%;
  height: 33px;
  appearance: none;
  padding: 0 5px;
  background: var(--field);
  border: 1px solid var(--line);
  border-radius: 3px;
}
.combo svg, .name-box svg { position: absolute; right: 4px; top: 1px; width: 14px; height: 30px; pointer-events: none; }
.font-name { width: 141px; }
.font-size { width: 68px; }
.number-format { width: 170px; }
.number-format .combo { height: 30px; }

.gallery {
  width: 510px;
  height: 71px;
  margin: 0 15px 0 14px;
  display: flex;
  background: var(--field);
  border: 1px solid var(--line);
  border-radius: 3px;
}
.styles { display: grid; grid-template-columns: repeat(3, 155px); grid-template-rows: 35px 34px; }
.style-cell { display: block; min-width: 0; padding: 2px; background: none; border-right: 1px solid var(--line); }
.style-cell:nth-child(-n+3) { border-bottom: 1px solid var(--line); }
.style-cell.picked { background: #b8b8b8; }
.swatch {
  display: block;
  width: 100%;
  height: 30px;
  padding-left: 4px;
  overflow: hidden;
  white-space: nowrap;
  text-align: left;
  font: 22px/30px var(--cell-font);
}
.heading { background: #fff; color: #44546a; font-weight: 700; border-bottom: 2px solid #9bc2e6; }
.normal { background: #fff; color: #000; }
.neutral { background: #ffeb9c; color: #9c6500; }
.bad { background: #ffc7ce; color: #9c0006; }
.good { background: #c6efce; color: #006100; }
.entry { background: #ffcc99; color: #3f3f76; box-shadow: inset 0 0 0 1px #7f7f7f; }
.gallery-more { flex: 1; }

/* workspace */
.workspace { flex: 1; min-height: 0; display: flex; }
.rail { width: 59px; flex: none; display: flex; flex-direction: column; align-items: center; gap: 27px; padding-top: 30px; }
.rail button { height: 30px; }
.editor { flex: 1; min-width: 0; display: flex; flex-direction: column; border: solid var(--line); border-width: 0 1px; }

.formula-bar { height: 30px; flex: none; display: flex; background: var(--field); border-bottom: 1px solid var(--line); }
.name-box { position: relative; width: 149px; }
.name-box input { width: 100%; height: 29px; padding-left: 6px; background: none; }
.name-box svg { right: 9px; top: 0; }
.fx { width: 32px; padding-bottom: 2px; border: solid var(--line); border-width: 0 1px; background: var(--panel); font: italic 22px "Liberation Serif", serif; }
.formula { flex: 1; min-width: 0; background: none; }
.expand { width: 24px; padding-bottom: 2px; }

.grid-area { flex: 1; min-height: 0; display: flex; margin-top: 6px; border-top: 1px solid var(--line); background: var(--head); }
.sheet-column { flex: 1; min-width: 0; display: flex; flex-direction: column; }
.sheet { flex: 1; min-height: 0; overflow: hidden; background: #fff; }

table { width: 100%; table-layout: fixed; border-collapse: separate; border-spacing: 0; font: 22px/26px var(--cell-font); color: #000; }
.c-head { width: 39px; }
.c-a { width: 156px; }
.c-b { width: 227px; }
.c-c { width: 182px; }
.c-d { width: 204px; }
.c-e { width: 213px; }
.c-f { width: 338px; }
.c-g { width: 189px; }
.c-h { width: 206px; }
tr { height: 28px; }
td, th { padding: 0 2px; white-space: nowrap; overflow: hidden; border: solid #c9c9c9; border-width: 0 1px 1px 0; }
th { background: var(--head); color: var(--text); font-weight: 400; border-color: #777; }
tr > :last-child { border-right: 0; padding-right: 0; }
th.current { background: #888; }
thead .current { border-bottom: 2px solid var(--green); }
tbody .current { border-right: 2px solid var(--green); }
.corner svg { margin-left: 13px; }
.titles { height: 27px; }
.titles td { color: #44546a; font-weight: 700; border-style: dotted; border-color: #000; }
.data td { border-color: #000; }
.num { text-align: right; }
.selected { position: relative; overflow: visible; }
.cursor { position: absolute; inset: -2px; border: 2px solid var(--green); }
.cursor::after { content: ""; position: absolute; right: -4px; bottom: -4px; width: 6px; height: 6px; background: var(--green); border: solid #fff; border-width: 1px 0 0 1px; }

/* scroll bars */
.scroll { flex: none; display: flex; background: var(--head); }
.scroll-arrow { width: 19px; height: 19px; flex: none; display: flex; align-items: center; justify-content: center; background: var(--panel); border: 1px solid var(--line); }
.scroll-arrow svg { fill: #a6a6a6; stroke: none; }
.thumb { display: flex; align-items: center; justify-content: center; background: var(--panel); border: 1px solid var(--line); }
.horizontal { height: 21px; padding: 0 2px 0 1px; gap: 2px; border-top: 1px solid var(--line); }
.horizontal .thumb { flex: 1; height: 19px; }
.horizontal .track { width: 95px; }
.horizontal .grip { width: 20px; height: 8px; background: repeating-linear-gradient(90deg, #999 0 1px, transparent 1px 3px); }
.vertical { flex-direction: column; width: 21px; padding: 2px 2px 23px 0; gap: 2px; }
.vertical .thumb { flex: 1; }
.vertical .grip { width: 8px; height: 20px; background: repeating-linear-gradient(#999 0 1px, transparent 1px 3px); }

/* status bar */
.status { height: 38px; flex: none; display: flex; border-top: 1px solid var(--line); font-weight: 700; font-size: 17px; }
.status-nav, .status-add { display: flex; align-items: center; border-right: 1px solid var(--line); }
.status-nav { width: 103px; padding-left: 27px; gap: 24px; color: #8c8c8c; }
.status-add { width: 91px; padding-left: 18px; gap: 17px; }
.sheet-tab { width: 86px; margin-top: -1px; background: var(--field); border-top: 6px solid var(--green); border-right: 1px solid var(--line); padding-bottom: 3px; }
.zoom { margin-left: auto; display: flex; align-items: center; gap: 23px; padding-right: 66px; }
```
